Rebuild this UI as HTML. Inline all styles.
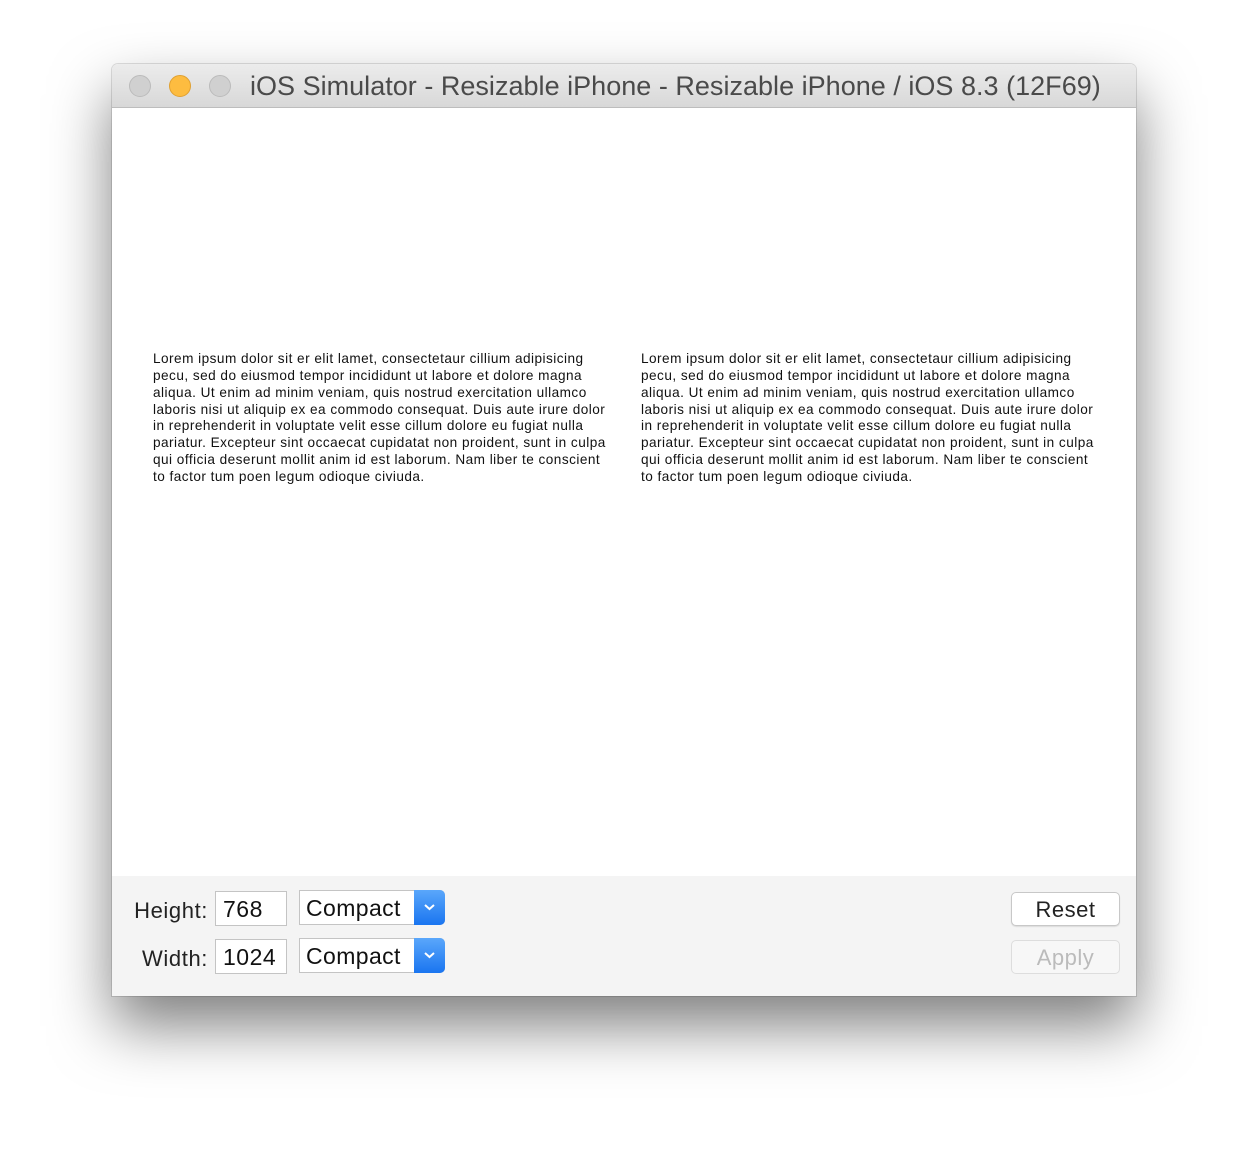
<!DOCTYPE html>
<html><head><style>
body{margin:0;width:1248px;height:1156px;background:#fff;font-family:"Liberation Sans",sans-serif;position:relative;overflow:hidden}
.win{position:absolute;left:112px;top:64px;width:1024px;height:932px;background:#fff;border-radius:6px 6px 0 0;box-shadow:0 30px 60px rgba(0,0,0,.5),0 0 0 1px rgba(0,0,0,.12);overflow:hidden}
.tb{position:absolute;left:0;top:0;width:1024px;height:43px;background:linear-gradient(#ececec,#d8d8d8);border-bottom:1px solid #bdbdbd}
.dot{position:absolute;top:11px;width:22px;height:22px;border-radius:50%;box-sizing:border-box;background:#d0d0d0;border:1px solid #bbb}
.title{position:absolute;left:138px;top:7px;font-size:27px;letter-spacing:0.02px;color:#4a4a4a;white-space:nowrap}
.p{position:absolute;top:287px;width:480px;font-size:13.6px;letter-spacing:0.47px;line-height:16.85px;color:#111;white-space:nowrap}
.bot{position:absolute;left:0;top:812px;width:1024px;height:120px;background:#f4f4f4}
.lbl{position:absolute;font-size:22px;letter-spacing:0.6px;color:#222;text-align:right;width:96px}
.in{position:absolute;left:103px;width:72px;height:35px;border:1px solid #c4c4c4;background:#fff;box-sizing:border-box;font-size:23px;letter-spacing:0.5px;padding-left:7px;line-height:35px;color:#111}
.pop{position:absolute;left:187px;width:146px;height:35px;border:1px solid #c4c4c4;background:#fff;box-sizing:border-box;font-size:23px;letter-spacing:0.4px;padding-left:6px;line-height:35px;color:#111;border-radius:0 5px 5px 0}
.pop i{position:absolute;right:-1px;top:-1px;width:31px;height:35px;background:linear-gradient(#5aa7fb,#1a75f0);border-radius:0 5px 5px 0}
.btn{position:absolute;left:899px;width:109px;height:34px;border:1px solid #c8c8c8;border-radius:5px;background:#fff;box-sizing:border-box;text-align:center;font-size:22px;letter-spacing:0.5px;line-height:34px;color:#222;box-shadow:0 1px 1px rgba(0,0,0,.1)}
</style></head><body>
<div class="win">
<div class="tb">
<div class="dot" style="left:17px"></div>
<div class="dot" style="left:57px;background:#fdbc40;border-color:#e0a030"></div>
<div class="dot" style="left:97px"></div>
<div class="title">iOS Simulator - Resizable iPhone - Resizable iPhone / iOS 8.3 (12F69)</div>
</div>
<div class="p" style="left:41px">Lorem ipsum dolor sit er elit lamet, consectetaur cillium adipisicing<br>pecu, sed do eiusmod tempor incididunt ut labore et dolore magna<br>aliqua. Ut enim ad minim veniam, quis nostrud exercitation ullamco<br>laboris nisi ut aliquip ex ea commodo consequat. Duis aute irure dolor<br>in reprehenderit in voluptate velit esse cillum dolore eu fugiat nulla<br>pariatur. Excepteur sint occaecat cupidatat non proident, sunt in culpa<br>qui officia deserunt mollit anim id est laborum. Nam liber te conscient<br>to factor tum poen legum odioque civiuda.</div>
<div class="p" style="left:529px">Lorem ipsum dolor sit er elit lamet, consectetaur cillium adipisicing<br>pecu, sed do eiusmod tempor incididunt ut labore et dolore magna<br>aliqua. Ut enim ad minim veniam, quis nostrud exercitation ullamco<br>laboris nisi ut aliquip ex ea commodo consequat. Duis aute irure dolor<br>in reprehenderit in voluptate velit esse cillum dolore eu fugiat nulla<br>pariatur. Excepteur sint occaecat cupidatat non proident, sunt in culpa<br>qui officia deserunt mollit anim id est laborum. Nam liber te conscient<br>to factor tum poen legum odioque civiuda.</div>
<div class="bot">
<div class="lbl" style="left:0px;top:22px">Height:</div>
<div class="in" style="top:15px">768</div>
<div class="pop" style="top:14px">Compact<i><svg width="31" height="34"><path d="M11 15l4.5 4 4.5-4" stroke="#fff" stroke-width="2" fill="none"/></svg></i></div>
<div class="lbl" style="left:0px;top:70px">Width:</div>
<div class="in" style="top:63px">1024</div>
<div class="pop" style="top:62px">Compact<i><svg width="31" height="34"><path d="M11 15l4.5 4 4.5-4" stroke="#fff" stroke-width="2" fill="none"/></svg></i></div>
<div class="btn" style="top:16px">Reset</div>
<div class="btn" style="top:64px;color:#bbb;border-color:#ddd;box-shadow:none;background:#f7f7f7">Apply</div>
</div>
</div>
</body></html>
